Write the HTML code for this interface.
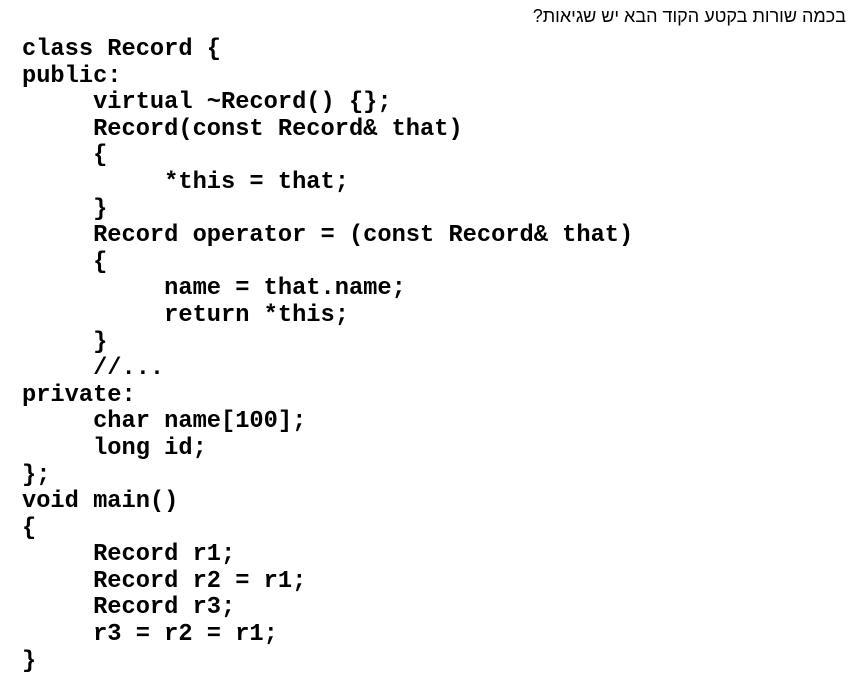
<!DOCTYPE html>
<html><head><meta charset="utf-8"><style>
html,body{margin:0;padding:0;background:#fff;width:867px;height:692px;overflow:hidden}
.q{position:absolute;right:21px;top:5px;font-family:"Liberation Sans","DejaVu Sans",sans-serif;font-size:18px;direction:rtl;color:#000;line-height:22px}
pre{position:absolute;left:22px;top:37px;margin:0;font-family:"Liberation Mono","Courier New",monospace;font-weight:bold;font-size:23.7px;line-height:26.6px;color:#000}
</style></head><body>
<div class="q">בכמה שורות בקטע הקוד הבא יש שגיאות?</div>
<pre>class Record {
public:
     virtual ~Record() {};
     Record(const Record&amp; that)
     {
          *this = that;
     }
     Record operator = (const Record&amp; that)
     {
          name = that.name;
          return *this;
     }
     //...
private:
     char name[100];
     long id;
};
void main()
{
     Record r1;
     Record r2 = r1;
     Record r3;
     r3 = r2 = r1;
}</pre>
</body></html>
